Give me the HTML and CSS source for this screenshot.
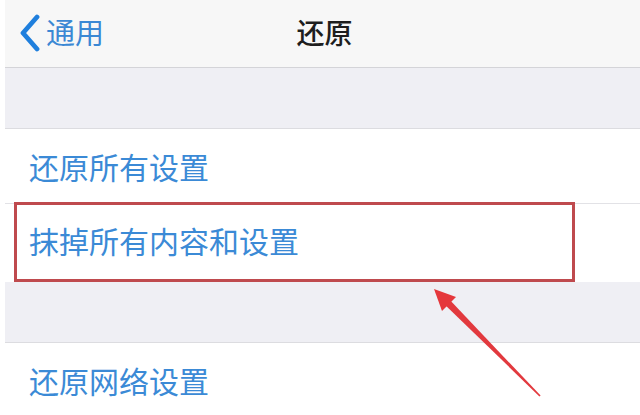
FILE: index.html
```html
<!DOCTYPE html>
<html lang="zh">
<head>
<meta charset="utf-8">
<link rel="stylesheet" href="styles.css">
</head>
<body>
<div class="screen">
  <header class="nav">
    <div class="back">
      <svg class="chev" width="24" height="38" viewBox="0 0 24 38"><path d="M19 3 L5 19 L19 35" fill="none" stroke="#1f7fdd" stroke-width="4.8" stroke-linecap="round" stroke-linejoin="round"/></svg>
      <span class="back-text">通用</span>
    </div>
    <div class="title">还原</div>
  </header>
  <div class="gap"></div>
  <div class="group">
    <div class="row"><span class="label">还原所有设置</span></div>
    <div class="row row-hl"><span class="label">抹掉所有内容和设置</span><div class="mark"></div></div>
  </div>
  <div class="gap"></div>
  <div class="group">
    <div class="row"><span class="label">还原网络设置</span></div>
  </div>
  <svg class="arrow" width="640" height="415" viewBox="0 0 640 415">
    <path d="M444.6 304.4 L449.4 299.6 L540.6 395.6 L539.4 396.4 Z" fill="#e2393e"/>
    <path d="M434 289 L456 297 L442 311 Z" fill="#e5383c"/>
  </svg>
</div>
</body>
</html>
```
FILE: styles.css
```css
html, body { margin: 0; padding: 0; }
body {
  background: #ffffff;
  font-family: "Noto Sans CJK SC", "Noto Sans", sans-serif;
  width: 640px;
  height: 415px;
  overflow: hidden;
}
.screen {
  position: relative;
  margin-left: 5px;
  height: 415px;
}
.nav {
  height: 67px;
  background: #f7f7f7;
  border-bottom: 1px solid #d4d4d8;
  display: flex;
  align-items: center;
  position: relative;
}
.back {
  display: flex;
  align-items: center;
  padding-left: 13px;
  gap: 4px;
}
.chev { display: block; margin-top: -2px; }
.back-text {
  color: #3b88d4;
  font-size: 29px;
  line-height: 1;
  margin-top: -4px;
}
.title {
  position: absolute;
  left: 0; right: 0;
  text-align: center;
  font-size: 28px;
  font-weight: 500;
  color: #1e1e1e;
  top: 14px;
  line-height: 36px;
  padding-left: 4px;
}
.gap {
  height: 60px;
  background: #efeff4;
  border-bottom: 1px solid #dcdce0;
}
.group { background: #ffffff; }
.row {
  position: relative;
  display: flex;
  align-items: center;
  height: 74px;
  padding-left: 24px;
}
.row + .row { border-top: 1px solid #e2e2e6; height: 78px; }
.label {
  color: #3b8ad6;
  font-size: 30px;
  line-height: 1;
}
.row-hl .label { margin-top: -6px; }
.mark {
  position: absolute;
  left: 9px;
  top: -2px;
  width: 555px;
  height: 74px;
  border: 3px solid #bf4a4e;
}
.arrow {
  position: absolute;
  left: -5px;
  top: 0;
  pointer-events: none;
}
```
